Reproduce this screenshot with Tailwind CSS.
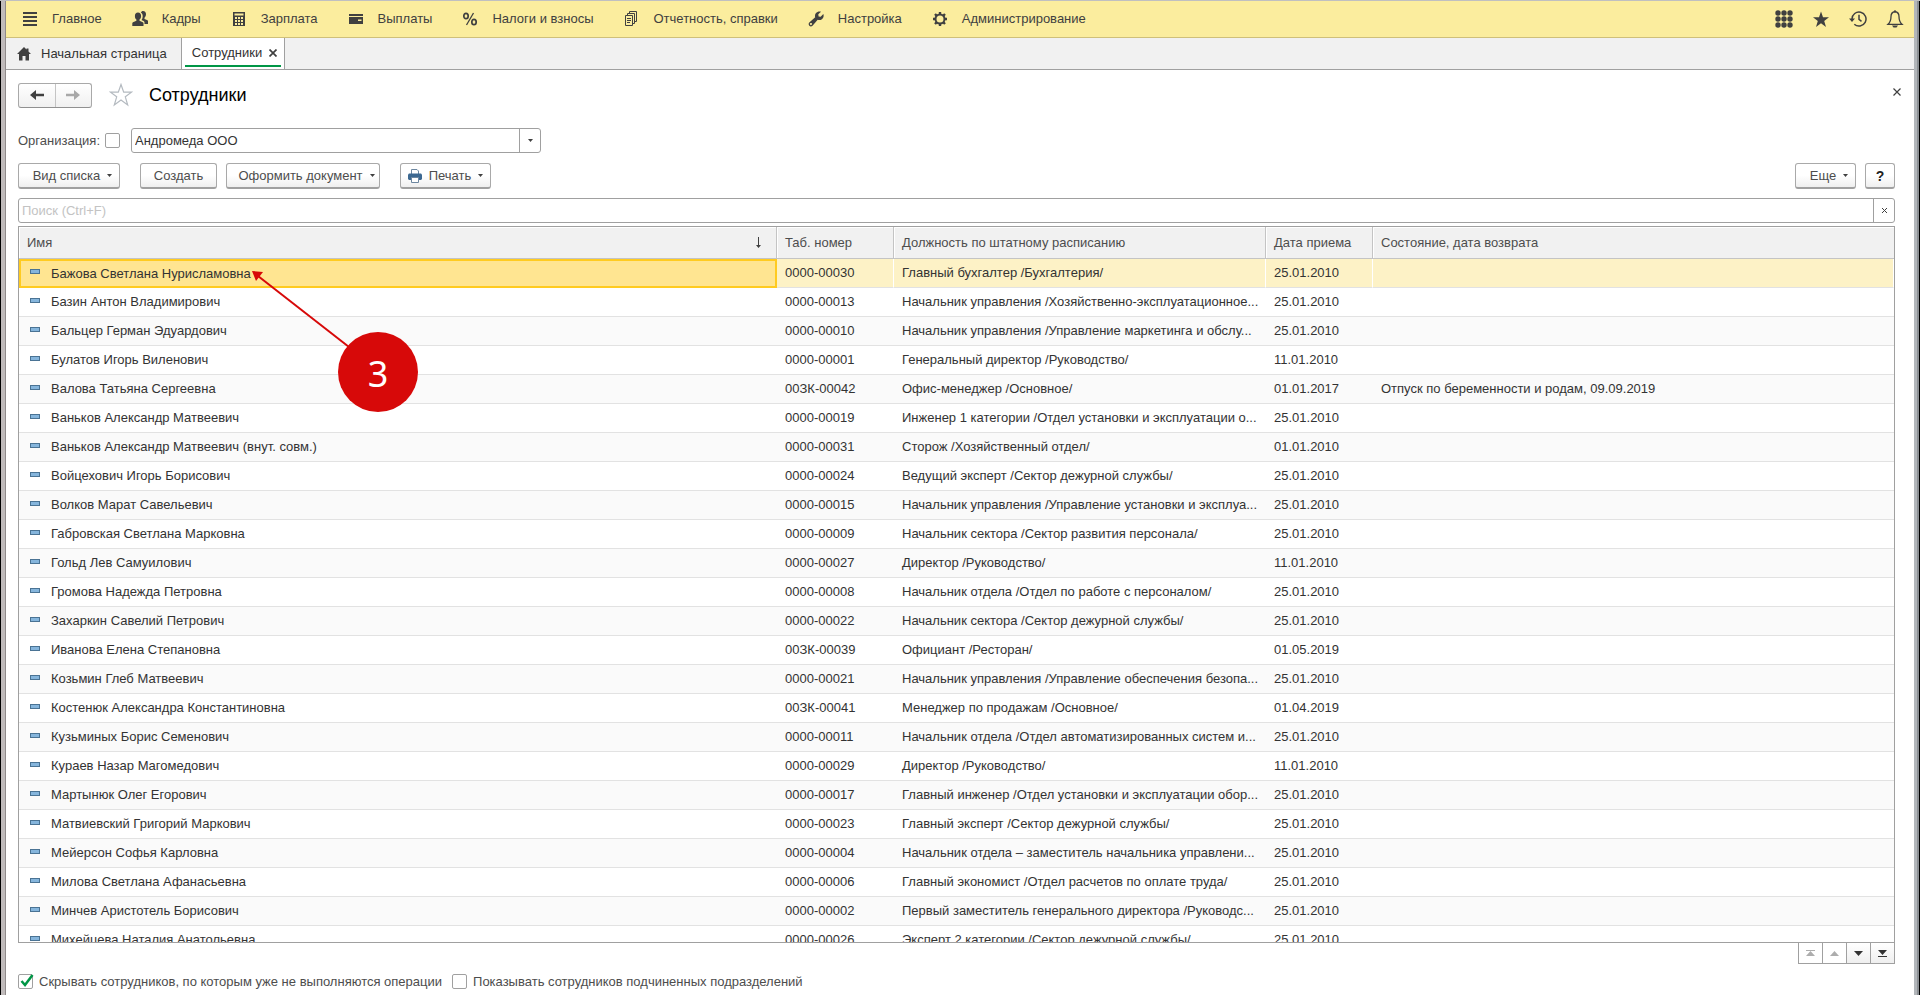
<!DOCTYPE html>
<html lang="ru">
<head>
<meta charset="utf-8">
<title>Сотрудники</title>
<script src="https://cdn.jsdelivr.net/npm/@tailwindcss/browser@4"></script>
</head>
<body class="h-screen overflow-hidden border-t border-[#c0c0c0] bg-white font-['Liberation_Sans',Arial,sans-serif] text-[13px] text-[#333]">
<div class="flex h-full border-x border-black">
<div class="w-[5px] shrink-0 border-r border-[#8f8a8a] bg-[#c0bbbb]"></div>
<div class="relative flex min-w-0 flex-1 flex-col">

<header class="flex h-[37px] shrink-0 items-center justify-between border-b border-[#cfc07a] bg-[#fbed9e] pr-2.5 pl-4 text-[#404040]">
  <nav class="flex items-center gap-[30px]">
    <a href="#" class="flex items-center gap-3.5"><svg class="size-4" viewBox="0 0 16 16" fill="#404040"><path d="M1 1h14v2H1zM1 5h14v2H1zM1 9h14v2H1zM1 13h14v2H1z"/></svg>Главное</a>
    <a href="#" class="flex items-center gap-3.5"><svg class="size-4" viewBox="0 0 16 16" fill="#404040"><path d="M11 0c2 0 3 1.400 3 3.200 0 1.500-.7 2.800-1.500 3.500v1.300l3 1.300c.4.200.5.500.5.900V13h-3.500v-1.200c0-1-.6-1.600-1.500-2L9.500 9c.8-1 1.200-2.500 1.200-4 0-1.400-.6-2.800-1.800-3.500C9.300.6 10 0 11 0z"/><path d="M6 1.600c2 0 3.100 1.400 3.100 3.300 0 1.600-.7 2.900-1.600 3.600v1.300l3.300 1.400c.5.200.7.600.7 1.100V15H.3v-2.700c0-.5.2-.9.7-1.100l3.400-1.400V8.500C3.500 7.800 2.900 6.500 2.900 4.900 2.900 3 4 1.600 6 1.600z"/></svg>Кадры</a>
    <a href="#" class="flex items-center gap-3.5"><svg class="size-4" viewBox="0 0 16 16" fill="#404040"><path fill-rule="evenodd" d="M2 1h12v14H2zM3.500 2.500v2h9v-2zM4 6v2h2V6zM7 6v2h2V6zM10 6v2h2V6zM4 9v2h2V9zM7 9v2h2V9zM10 9v2h2V9zM4 12v2h2v-2zM7 12v2h2v-2zM10 12v2h2v-2z"/></svg>Зарплата</a>
    <a href="#" class="flex items-center gap-3.5"><svg class="size-4" viewBox="0 0 16 16" fill="#404040"><path fill-rule="evenodd" d="M1 3h14v2H1zM1 6h14v7H1zM10 8.500v1.500h3.500V8.500z"/></svg>Выплаты</a>
    <a href="#" class="flex items-center gap-3.5"><svg class="size-4" viewBox="0 0 16 16" fill="none" stroke="#404040" stroke-width="1.700"><ellipse cx="4" cy="5" rx="2.200" ry="2.700"/><ellipse cx="12" cy="11" rx="2.200" ry="2.700"/><path stroke-width="1.300" d="M11.500 2 4.500 14"/></svg>Налоги и взносы</a>
    <a href="#" class="flex items-center gap-3.5"><svg class="size-4" viewBox="0 0 16 16" fill="none" stroke="#404040"><path d="M1.500 4.500h7v10h-7zM3.500 4.500v-2h7v10h-2M5.500 2.500v-2h7v10h-2M3 7.500h4M3 9.500h4M3 11.500h3"/></svg>Отчетность, справки</a>
    <a href="#" class="flex items-center gap-3.5"><svg class="size-4" viewBox="0 0 16 16" fill="#404040"><path fill-rule="evenodd" d="M13 .8 10.300 3.300l.3 2.100 2.100.3L15.300 3c.8 2 .1 4.100-1.400 5.200-1.200.9-2.800 1.100-4.200.6L4.500 14.700c-.9.9-2.300.9-3.200 0s-.9-2.300 0-3.200L7.200 6.300c-.5-1.400-.2-3 .8-4.200C9.200.7 11.200.2 13 .8zM2.900 12.100a1 1 0 1 0 .1 0z"/></svg>Настройка</a>
    <a href="#" class="flex items-center gap-3.5"><svg class="size-4" viewBox="0 0 16 16" fill="none" stroke="#404040"><circle cx="8" cy="8" r="4.500" stroke-width="2"/><path stroke-width="2.400" d="M8 3.500V1M8 12.500V15M3.500 8H1M12.500 8H15M4.800 4.800 3 3M11.200 11.200 13 13M4.800 11.200 3 13M11.200 4.800 13 3"/></svg>Администрирование</a>
  </nav>
  <div class="flex items-center gap-[19px]">
    <button aria-label="Разделы"><svg class="size-[18px]" viewBox="0 0 18 18" fill="#404040"><circle cx="3" cy="3" r="2.700"/><circle cx="9" cy="3" r="2.700"/><circle cx="15" cy="3" r="2.700"/><circle cx="3" cy="9" r="2.700"/><circle cx="9" cy="9" r="2.700"/><circle cx="15" cy="9" r="2.700"/><circle cx="3" cy="15" r="2.700"/><circle cx="9" cy="15" r="2.700"/><circle cx="15" cy="15" r="2.700"/></svg></button>
    <button aria-label="Избранное"><svg class="size-[18px]" viewBox="0 0 18 18" fill="#404040"><path d="m9 1.500 2 5.700h6l-4.800 3.700L14 17l-5-3.700L4 17l1.800-6.100L1 7.200h6z"/></svg></button>
    <button aria-label="История"><svg class="size-[18px]" viewBox="0 0 18 18" fill="none" stroke="#404040" stroke-width="1.500"><path d="M3 9a7 7 0 1 1 2.300 5.200M10 4.800v4.500l2.500 2"/><path fill="#404040" stroke="none" d="M0 8.500h6L3 12z"/></svg></button>
    <button aria-label="Уведомления"><svg class="size-[18px]" viewBox="0 0 18 18" fill="none" stroke="#404040" stroke-width="1.300"><path d="M9 1.500c-3 .6-4 2.500-4 5 0 4-1 6-3 7.800h14c-2-1.800-3-3.800-3-7.800 0-2.500-1-4.400-4-5z"/><path fill="#404040" stroke="none" d="M6 15.500h6l-1.500 2h-3zM8 .5h2v2H8z"/></svg></button>
  </div>
</header>

<div class="flex h-8 shrink-0 border-b border-[#a0a0a0] bg-[#f1f1f1]">
  <a href="#" class="flex items-center gap-2.5 pr-3.5 pl-[11px]"><svg class="size-[14px]" viewBox="0 0 14 14" fill="#404040"><path d="M7 0 0 7h2v6.500h3.500V9h3v4.500H12V7h2l-2.500-2.500V1.500h-2v1z"/></svg>Начальная страница</a>
  <div class="flex border-x border-[#a0a0a0] bg-white px-[3px]">
    <div class="mb-0.5 flex items-center gap-[7px] border-b-2 border-[#009646] pt-0.5 pr-1 pl-[7px]"><a href="#">Сотрудники</a><button aria-label="Закрыть вкладку"><svg class="size-2" viewBox="0 0 8 8" stroke="#404040" stroke-width="1.700"><path d="m.5.5 7 7m0-7-7 7"/></svg></button></div>
  </div>
</div>

<main class="flex min-h-0 flex-1 flex-col pt-3 pr-[19px] pl-3">
  <div class="flex h-[26px] shrink-0 items-center">
    <div class="flex h-[25px] w-[74px] rounded-[3px] border border-[#a9a9a9] border-b-[#909090] bg-linear-to-b from-white to-[#f0f0f0]">
      <button aria-label="Назад" class="flex flex-1 items-center justify-center border-r border-[#c4c4c4]"><svg class="h-3 w-4" viewBox="0 0 16 12" fill="#404040"><path d="M1 6l6-5v3.800h8v2.400H7V11z"/></svg></button>
      <button aria-label="Вперед" class="flex flex-1 items-center justify-center"><svg class="h-3 w-4" viewBox="0 0 16 12" fill="#a8a8a8"><path d="M15 6 9 1v3.800H1v2.400h8V11z"/></svg></button>
    </div>
    <button aria-label="В избранное" class="ml-[17px]"><svg class="size-6" viewBox="0 0 24 24" fill="none" stroke="#b4bac0" stroke-width="1.200"><path d="m12 1.500 2.700 7.700h7.800l-6.200 4.600 2.400 8.200-6.700-5-6.700 5 2.400-8.200-6.200-4.600h7.800z"/></svg></button>
    <h1 class="ml-4 text-lg text-black">Сотрудники</h1>
    <button aria-label="Закрыть" class="-mr-1.5 mb-1.5 ml-auto"><svg class="size-2" viewBox="0 0 8 8" stroke="#404040" stroke-width="1.200"><path d="m.5.5 7 7m0-7-7 7"/></svg></button>
  </div>

  <div class="mt-5 flex h-[25px] shrink-0 items-center">
    <label for="orgOn" class="w-[87px] text-[#4d4d4d]">Организация:</label>
    <input id="orgOn" type="checkbox" class="size-[15px] appearance-none rounded-[2px] border border-[#a0a0a0]">
    <div class="ml-[11px] flex h-[25px] w-[410px] rounded-[3px] border border-[#a0a0a0]">
      <input aria-label="Организация" value="Андромеда ООО" class="min-w-0 flex-1 px-[3px] outline-none">
      <button aria-label="Выбрать" class="flex w-[21px] items-center justify-center border-l border-[#a0a0a0]"><svg class="h-[3px] w-[5px]" viewBox="0 0 5 3" fill="#404040"><path d="M0 0h5L2.500 3z"/></svg></button>
    </div>
  </div>

  <div class="mt-2.5 flex h-[26px] shrink-0 text-[#4d4d4d]">
    <button class="flex w-[102px] items-center justify-center gap-[7px] rounded-[3px] border border-[#a9a9a9] border-b-2 border-b-[#a0a0a0] bg-linear-to-b from-white from-50% to-[#efefef] pl-[7px]">Вид списка<svg class="h-[3px] w-[5px]" viewBox="0 0 5 3" fill="#404040"><path d="M0 0h5L2.500 3z"/></svg></button>
    <button class="ml-5 w-[77px] rounded-[3px] border border-[#a9a9a9] border-b-2 border-b-[#a0a0a0] bg-linear-to-b from-white from-50% to-[#efefef]">Создать</button>
    <button class="ml-[9px] flex w-[154px] items-center justify-center gap-[7px] rounded-[3px] border border-[#a9a9a9] border-b-2 border-b-[#a0a0a0] bg-linear-to-b from-white from-50% to-[#efefef] pl-[7px]">Оформить документ<svg class="h-[3px] w-[5px]" viewBox="0 0 5 3" fill="#404040"><path d="M0 0h5L2.500 3z"/></svg></button>
    <button class="ml-5 flex w-[91px] items-center justify-center gap-[7px] rounded-[3px] border border-[#a9a9a9] border-b-2 border-b-[#a0a0a0] bg-linear-to-b from-white from-50% to-[#efefef]"><svg class="size-[14px]" viewBox="0 0 14 14"><path fill="#fff" stroke="#6d87a0" d="M3.500 5V.5H9L10.500 2v3"/><path fill="#3c6891" d="M1 4.500h12l1 1V10l-1 1H1l-1-1V5.500z"/><path fill="#fff" stroke="#6d87a0" d="M3.500 8.500h7v5h-7z"/></svg>Печать<svg class="h-[3px] w-[5px]" viewBox="0 0 5 3" fill="#404040"><path d="M0 0h5L2.500 3z"/></svg></button>
    <button class="ml-auto flex w-[61px] items-center justify-center gap-[7px] rounded-[3px] border border-[#a9a9a9] border-b-2 border-b-[#a0a0a0] bg-linear-to-b from-white from-50% to-[#efefef] pl-[7px]">Еще<svg class="h-[3px] w-[5px]" viewBox="0 0 5 3" fill="#404040"><path d="M0 0h5L2.500 3z"/></svg></button>
    <button class="ml-[9px] w-[30px] rounded-[3px] border border-[#a9a9a9] border-b-2 border-b-[#a0a0a0] bg-linear-to-b from-white from-50% to-[#efefef] text-sm font-bold text-[#222]">?</button>
  </div>

  <div class="mt-[9px] flex h-[25px] shrink-0 rounded-[3px] border border-[#a0a0a0]">
    <input aria-label="Поиск" placeholder="Поиск (Ctrl+F)" class="min-w-0 flex-1 px-[3px] outline-none placeholder:text-[#c3c3c3]">
    <button aria-label="Очистить" class="flex w-[21px] items-center justify-center border-l border-[#a0a0a0]"><svg class="size-[5px]" viewBox="0 0 5 5" stroke="#404040"><path d="m0 0 5 5m0-5-5 5"/></svg></button>
  </div>

  <div class="mt-[3px] h-[717px] shrink-0 overflow-hidden border border-[#a0a0a0]">
    <table class="w-full table-fixed border-separate border-spacing-0">
      <colgroup><col class="w-[758px]"><col class="w-[117px]"><col class="w-[372px]"><col class="w-[107px]"><col></colgroup>
      <thead>
        <tr class="h-8 bg-[#f1f1f1] text-left text-[#4d4d4d] *:border-b *:border-[#c4c4c4] *:font-normal *:shadow-[inset_1px_1px_#fff]">
          <th class="border-r pr-[15px] pl-2"><div class="flex items-center justify-between">Имя<svg class="h-[11px] w-[5px]" viewBox="0 0 5 11" fill="#404040"><path d="M2 0h1v8h2L2.500 11 0 8h2z"/></svg></div></th>
          <th class="border-r px-2">Таб. номер</th><th class="border-r px-2">Должность по штатному расписанию</th><th class="border-r px-2">Дата приема</th><th class="px-2">Состояние, дата возврата</th>
        </tr>
      </thead>
      <tbody id="rows"></tbody>
    </table>
  </div>
  <div class="-mt-px flex h-[22px] shrink-0 self-end border border-[#a0a0a0]">
    <button aria-label="В начало" class="flex w-6 items-center justify-center border-r border-[#a0a0a0]"><svg class="h-[7px] w-[9px]" viewBox="0 0 9 7" fill="#adadad"><path d="M0 0h9v1H0zM4.500 1 9 6H0z"/></svg></button>
    <button aria-label="Вверх" class="flex w-6 items-center justify-center border-r border-[#a0a0a0]"><svg class="h-[5px] w-[9px]" viewBox="0 0 9 5" fill="#adadad"><path d="M4.500 0 9 5H0z"/></svg></button>
    <button aria-label="Вниз" class="flex w-6 items-center justify-center border-r border-[#a0a0a0] bg-linear-to-b from-white to-[#efefef]"><svg class="h-[5px] w-[9px]" viewBox="0 0 9 5" fill="#333"><path d="M0 0h9L4.500 5z"/></svg></button>
    <button aria-label="В конец" class="flex w-[23px] items-center justify-center bg-linear-to-b from-white to-[#efefef]"><svg class="h-[7px] w-[9px]" viewBox="0 0 9 7" fill="#333"><path d="M0 0h9L4.500 5zM0 6h9v1H0z"/></svg></button>
  </div>

  <div class="mt-2 flex shrink-0 items-center text-[#4d4d4d]">
    <span class="relative flex"><input id="hide" type="checkbox" checked class="peer size-[15px] appearance-none rounded-[2px] border border-[#a0a0a0]"><svg class="pointer-events-none absolute bottom-0.5 left-0.5 hidden h-[13px] w-[14px] peer-checked:block" viewBox="0 0 14 13" fill="none" stroke="#009646" stroke-width="2.500"><path d="m1.500 7 3.500 4L12.500 1"/></svg></span>
    <label for="hide" class="ml-1.5">Скрывать сотрудников, по которым уже не выполняются операции</label>
    <input id="sub" type="checkbox" class="ml-2.5 size-[15px] appearance-none rounded-[2px] border border-[#a0a0a0]">
    <label for="sub" class="ml-1.5">Показывать сотрудников подчиненных подразделений</label>
  </div>
</main>

<svg class="pointer-events-none absolute top-[260px] left-[240px] h-[110px] w-[110px]" viewBox="0 0 110 110"><path d="M12 15 103 86" stroke="#d70909" stroke-width="2"/><path d="m6 10 11 1-7 9z" fill="#d70909"/></svg>
<div class="absolute top-[331px] left-[332px] flex size-20 items-center justify-center rounded-full bg-[#d70909] pt-1 font-['Noto_Sans',sans-serif] text-4xl text-white">3</div>
</div>
<div class="w-[5px] shrink-0 border-r-2 border-[#8c9094] bg-[#b2b6ba]"></div>
</div>

<script>
const people = [
["Бажова Светлана Нурисламовна","0000-00030","Главный бухгалтер /Бухгалтерия/","25.01.2010"],
["Базин Антон Владимирович","0000-00013","Начальник управления /Хозяйственно-эксплуатационное...","25.01.2010"],
["Бальцер Герман Эдуардович","0000-00010","Начальник управления /Управление маркетинга и обслу...","25.01.2010"],
["Булатов Игорь Виленович","0000-00001","Генеральный директор /Руководство/","11.01.2010"],
["Валова Татьяна Сергеевна","00ЗК-00042","Офис-менеджер /Основное/","01.01.2017","Отпуск по беременности и родам, 09.09.2019"],
["Ваньков Александр Матвеевич","0000-00019","Инженер 1 категории /Отдел установки и эксплуатации о...","25.01.2010"],
["Ваньков Александр Матвеевич (внут. совм.)","0000-00031","Сторож /Хозяйственный отдел/","01.01.2010"],
["Войцехович Игорь Борисович","0000-00024","Ведущий эксперт /Сектор дежурной службы/","25.01.2010"],
["Волков Марат Савельевич","0000-00015","Начальник управления /Управление установки и эксплуа...","25.01.2010"],
["Габровская Светлана Марковна","0000-00009","Начальник сектора /Сектор развития персонала/","25.01.2010"],
["Гольд Лев Самуилович","0000-00027","Директор /Руководство/","11.01.2010"],
["Громова Надежда Петровна","0000-00008","Начальник отдела /Отдел по работе с персоналом/","25.01.2010"],
["Захаркин Савелий Петрович","0000-00022","Начальник сектора /Сектор дежурной службы/","25.01.2010"],
["Иванова Елена Степановна","00ЗК-00039","Официант /Ресторан/","01.05.2019"],
["Козьмин Глеб Матвеевич","0000-00021","Начальник управления /Управление обеспечения безопа...","25.01.2010"],
["Костенюк Александра Константиновна","00ЗК-00041","Менеджер по продажам /Основное/","01.04.2019"],
["Кузьминых Борис Семенович","0000-00011","Начальник отдела /Отдел автоматизированных систем и...","25.01.2010"],
["Кураев Назар Магомедович","0000-00029","Директор /Руководство/","11.01.2010"],
["Мартынюк Олег Егорович","0000-00017","Главный инженер /Отдел установки и эксплуатации обор...","25.01.2010"],
["Матвиевский Григорий Маркович","0000-00023","Главный эксперт /Сектор дежурной службы/","25.01.2010"],
["Мейерсон Софья Карловна","0000-00004","Начальник отдела – заместитель начальника управлени...","25.01.2010"],
["Милова Светлана Афанасьевна","0000-00006","Главный экономист /Отдел расчетов по оплате труда/","25.01.2010"],
["Минчев Аристотель Борисович","0000-00002","Первый заместитель генерального директора /Руководс...","25.01.2010"],
["Михейцева Наталия Анатольевна","0000-00026","Эксперт 2 категории /Сектор дежурной службы/","25.01.2010"]
];
const mark = '<span class="mb-1 h-[5px] w-[10px] shrink-0 border border-[#4a7394] bg-[#85b5dc]"></span>';
document.getElementById("rows").innerHTML = people.map((p, i) => {
  const row = i === 0 ? "h-[29px] bg-[#fdf2c6]" : i % 2 ? "h-[29px] bg-white" : "h-[29px] bg-[#fafafa]";
  const td = i === 0 ? "whitespace-nowrap border-b border-[#e2e2e2] border-r border-r-white pl-2" : "whitespace-nowrap border-b border-[#e2e2e2] pl-2";
  const name = i === 0 ? "border-2 border-[#ffcb20] bg-[#ffe591] pl-[9px]" : "border-b border-[#e2e2e2] pl-[11px]";
  return `<tr class="${row}"><td class="${name}"><div class="flex items-center gap-[11px] whitespace-nowrap">${mark}${p[0]}</div></td>`
    + [p[1], p[2], p[3], p[4] || ""].map(t => `<td class="${td}">${t}</td>`).join("") + "</tr>";
}).join("");
</script>
</body>
</html>
